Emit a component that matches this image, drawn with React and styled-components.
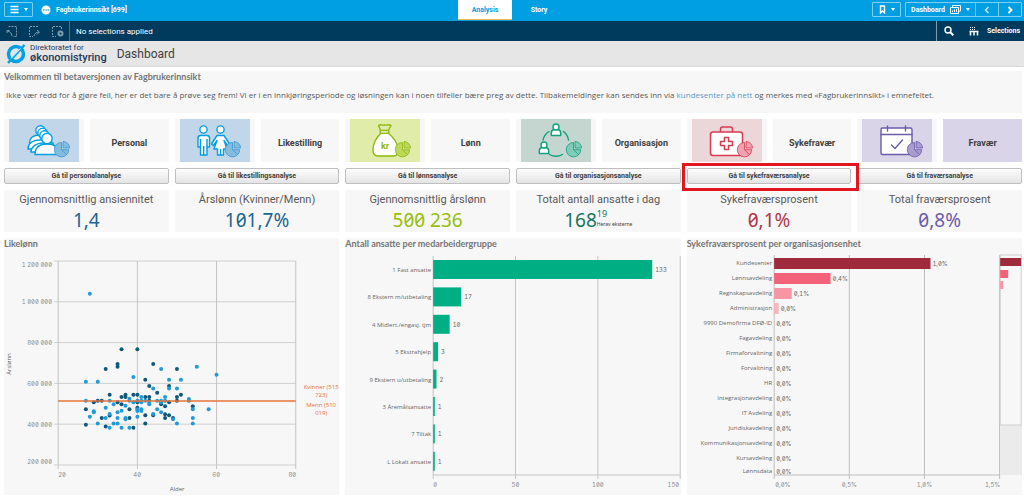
import React, { useState } from "react";
import styled, { createGlobalStyle } from "styled-components";

const BLUE = "#009fe3";

// [age, pay in thousands]
const men = [
  [36, 768], [40, 768], [35, 695], [35, 682], [32, 670], [44, 695], [50, 670],
  [42, 618], [43, 587], [45, 554], [48, 587], [33, 544], [37, 544], [39, 544],
  [40, 544], [51, 544], [36, 533], [37, 533], [42, 533], [43, 533], [50, 533],
  [30, 515], [31, 515], [50, 515], [29, 507], [35, 507], [40, 507], [48, 507],
  [43, 515], [36, 498], [46, 498], [47, 488], [54, 488], [40, 481], [27, 473],
  [38, 473], [33, 443], [42, 444], [44, 444], [47, 449], [48, 444], [31, 430],
  [38, 430], [47, 430], [49, 430], [42, 404], [27, 397], [32, 389], [39, 382],
];

const women = [
  [28, 1040], [46, 670], [55, 682], [60, 642], [39, 631], [27, 608], [30, 608],
  [48, 618], [51, 618], [44, 575], [48, 575], [50, 575], [38, 525], [41, 533],
  [47, 533], [53, 523], [53, 515], [27, 515], [33, 515], [38, 515], [40, 515],
  [41, 515], [42, 515], [45, 515], [46, 515], [47, 515], [39, 507], [41, 507],
  [43, 505], [46, 507], [34, 498], [43, 498], [37, 490], [32, 481], [54, 473],
  [58, 473], [40, 473], [41, 473], [45, 473], [29, 464], [36, 466], [40, 465],
  [41, 465], [35, 458], [46, 458], [29, 458], [33, 450], [44, 450], [28, 436],
  [40, 436], [32, 430], [35, 430], [37, 430], [54, 430], [37, 424], [49, 424],
  [30, 404], [34, 404], [35, 404], [50, 404], [54, 404], [33, 382], [36, 382],
  [38, 382],
];

const groups = [
  ["1 Fast ansatte", 133],
  ["8 Ekstern m/utbetaling", 17],
  ["4 Midlert./engasj. tjm", 10],
  ["5 Ekstrahjelp", 3],
  ["9 Ekstern u/utbetaling", 2],
  ["3 Åremålsansatte", 1],
  ["7 Tiltak", 1],
  ["L Lokalt ansatte", 1],
];

const units = [
  ["Kundesenter", 1.04, "1,0%", "#9e2a3b"],
  ["Lønnsavdeling", 0.375, "0,4%", "#f4627a"],
  ["Regnskapsavdeling", 0.117, "0,1%", "#f895a5"],
  ["Administrasjon", 0.03, "0,0%", "#fab3bf"],
  ["9990 Demofirma DFØ-ID", 0, "0,0%"],
  ["Fagavdeling", 0, "0,0%"],
  ["Firmaforvaltning", 0, "0,0%"],
  ["Forvaltning", 0, "0,0%"],
  ["HR", 0, "0,0%"],
  ["Integrasjonavdeling", 0, "0,0%"],
  ["IT Avdeling", 0, "0,0%"],
  ["Juridiskavdeling", 0, "0,0%"],
  ["Kommunikasjonsavdeling", 0, "0,0%"],
  ["Kursavdeling", 0, "0,0%"],
  ["Lønnsdata", 0, "0,0%"],
];

const Pie = ({ stroke, fill }) => (
  <g stroke={stroke} fill={fill} strokeWidth="0.8" strokeLinejoin="round">
    <path d="M52.5 23.5 A7.2 7.2 0 1 0 59.7 30.7 H52.5 Z" />
    <path d="M54 22.5 A6.5 6.5 0 0 1 60.5 29 H54 Z" />
    <path d="M52.5 30.7 L57.5 35.7" fill="none" />
  </g>
);

const PersonalIcon = () => (
  <Icon viewBox="0 0 70 43">
    <g stroke={BLUE} fill="#fff" strokeWidth="1.4">
      <path d="M20.5 24 C20.5 18 25 16 31 16 H40 V24 Z" />
      <path d="M19 30 C19 24 24 21 31 21 H42 V30 Z" />
      <path d="M22 33 C22 28 27 24 34 24 H44 V33 Z" />
      <circle cx="31.5" cy="11.5" r="4.7" />
      <circle cx="33.5" cy="14" r="4.7" />
      <circle cx="35.5" cy="16.5" r="4.7" />
      <path d="M26 35.5 C26 28 31 25 38 25 C45 25 50 28 50 35.5 Z" />
      <circle cx="38" cy="19.5" r="5.2" />
    </g>
    <Pie stroke="#3d97cf" fill="#84bce0" />
  </Icon>
);

const EqualityIcon = () => (
  <Icon viewBox="0 0 70 43">
    <g stroke={BLUE} fill="#fff" strokeWidth="1.4" strokeLinejoin="round">
      <circle cx="23.5" cy="10.5" r="3.6" />
      <path d="M18 28 V19 Q18 16.5 20.5 16.5 H27 Q29.5 16.5 29.5 19 V28 H27 V36 H20.5 V28 Z" />
      <path d="M20.5 20 V28 M27 20 V28 M23.7 27 V36" fill="none" />
      <circle cx="40.5" cy="10.5" r="3.6" />
      <path d="M37 16.5 H44 L49.5 25 L47.5 26.5 L44 21.5 L47 30 H43.5 V36 H37.5 V30 H34 L37 21.5 L33.5 26.5 L31.5 25 Z" />
      <path d="M40.5 30 V36" />
    </g>
    <Pie stroke="#3d97cf" fill="#84bce0" />
  </Icon>
);

const PayIcon = () => (
  <Icon viewBox="0 0 70 43">
    <g stroke="#8fb80e" fill="#fff" strokeWidth="1.4" strokeLinejoin="round">
      <path d="M31 14 C26 19 23 26 23 31 C23 35 25 37 28 37 H44 C47 37 49 34 48 29 C47 23 43 18 38 14 Z" />
      <path d="M31 12 L28.5 6.5 C31 4.5 32 7 34.5 5.8 C37 7 38.5 4.5 41 6.5 L38 12 Z" fill="#dfecaa" />
      <rect x="30" y="11.5" width="9" height="2.6" rx="1.3" />
    </g>
    <text x="35" y="30" textAnchor="middle" fontSize="9" fontWeight="700" fill="#8fb80e">kr</text>
    <Pie stroke="#8fb80e" fill="#bcd75a" />
  </Icon>
);

const Member = ({ x, y }) => (
  <g transform={`translate(${x} ${y})`} stroke="#10a07b" fill="#fff" strokeWidth="1.4" strokeLinejoin="round">
    <path d="M-4.7 6.5 V4 Q-4.7 1 -2 0.5 H2 Q4.7 1 4.7 4 V6.5 Z" />
    <circle cx="0" cy="-2" r="3" />
  </g>
);

const OrganisationIcon = () => (
  <Icon viewBox="0 0 70 43">
    <g fill="none" stroke="#10a07b" strokeWidth="1.4" strokeLinecap="round">
      <path d="M28 12.5 A13.5 13.5 0 0 0 22 21" />
      <path d="M42.5 12.5 A13.5 13.5 0 0 1 47.5 21" />
      <path d="M28.5 35.5 A13.5 13.5 0 0 0 41.5 35.5" />
    </g>
    <Member x={35} y={10} />
    <Member x={23} y={28} />
    <Pie stroke="#10a07b" fill="#7fcdb8" />
  </Icon>
);

const SickIcon = () => (
  <Icon viewBox="0 0 70 43">
    <g stroke="#d83a52" fill="#fff" strokeWidth="1.5" strokeLinejoin="round">
      <path d="M28.5 13 V10 Q28.5 8 30.5 8 H38.5 Q40.5 8 40.5 10 V13" fill="none" />
      <rect x="18.5" y="13" width="32" height="23.5" rx="2.5" />
      <path d="M32.5 18.5 H36.5 V22.5 H40.5 V26.5 H36.5 V30.5 H32.5 V26.5 H28.5 V22.5 H32.5 Z" />
    </g>
    <Pie stroke="#d83a52" fill="#f0a3ae" />
  </Icon>
);

const AbsenceIcon = () => (
  <Icon viewBox="0 0 70 43">
    <g stroke="#6c5cab" fill="#fff" strokeWidth="1.4" strokeLinecap="round" strokeLinejoin="round">
      <rect x="19" y="9" width="31" height="26.5" rx="1.5" />
      <path d="M19 15.5 H50 M25.5 7 V12 M43.5 7 V12" fill="none" />
      <path d="M29.5 26 L33 29.5 L40.5 21" fill="none" />
    </g>
    <Pie stroke="#6c5cab" fill="#a79bcf" />
  </Icon>
);

const topics = [
  { name: "Personal", action: "Gå til personalanalyse", icon: PersonalIcon, tint: "#c1d6e9" },
  { name: "Likestilling", action: "Gå til likestillingsanalyse", icon: EqualityIcon, tint: "#c1d6e9" },
  { name: "Lønn", action: "Gå til lønnsanalyse", icon: PayIcon, tint: "#dfecaa" },
  { name: "Organisasjon", action: "Gå til organisasjonsanalyse", icon: OrganisationIcon, tint: "#c5d6d0" },
  { name: "Sykefravær", action: "Gå til sykefraværsanalyse", icon: SickIcon, tint: "#ecd7d8", marked: true },
  { name: "Fravær", action: "Gå til fraværsanalyse", icon: AbsenceIcon, tint: "#d9d4e7", filled: true },
];

const kpis = [
  { label: "Gjennomsnittlig ansiennitet", value: "1,4", color: "#1c6690" },
  { label: "Årslønn (Kvinner/Menn)", value: "101,7%", color: "#1c6690" },
  { label: "Gjennomsnittlig årslønn", value: "500 236", color: "#97bf0d" },
  { label: "Totalt antall ansatte i dag", value: "168", color: "#18735c", extra: "19", note: "Herav eksterne" },
  { label: "Sykefraværsprosent", value: "0,1%", color: "#b03547" },
  { label: "Total fraværsprosent", value: "0,8%", color: "#6c5cab" },
];

const ScatterChart = () => {
  const x = (age) => 54 + (age - 20) * 3.96;
  const y = (pay) => 215 - (pay - 200) * 0.204;

  return (
    <Chart viewBox="0 0 335 245" role="img" aria-label="Likelønn">
      {[200, 400, 600, 800, 1000, 1200].map((pay) => (
        <path key={pay} d={`M50 ${y(pay)} H${x(80)}`} stroke="#cfcfcf" />
      ))}
      {[20, 40, 60, 80].map((age) => (
        <path key={age} d={`M${x(age)} 11 V219`} stroke="#c4c4c4" />
      ))}
      <AxisText x="48" y="17" $end>1 200 000</AxisText>
      <AxisText x="48" y="54" $end>1 000 000</AxisText>
      <AxisText x="48" y="95" $end>800 000</AxisText>
      <AxisText x="48" y="136" $end>600 000</AxisText>
      <AxisText x="48" y="177" $end>400 000</AxisText>
      <AxisText x="48" y="214" $end>200 000</AxisText>
      <AxisText x="54" y="227">20</AxisText>
      <AxisText x="133" y="227" $middle>40</AxisText>
      <AxisText x="212" y="227" $middle>60</AxisText>
      <AxisText x="292" y="227" $end>80</AxisText>
      <LabelText x="173" y="241" $middle>Alder</LabelText>
      <LabelText transform="translate(7 114) rotate(-90)" $middle>Årslønn</LabelText>
      {men.map(([age, pay], i) => (
        <circle key={i} cx={x(age)} cy={y(pay)} r="2" fill="#10587a" />
      ))}
      {women.map(([age, pay], i) => (
        <circle key={i} cx={x(age)} cy={y(pay)} r="2" fill="#1f9bd7" />
      ))}
      <path d={`M${x(20)} ${y(514)} H${x(80)}`} stroke="#e6743a" strokeWidth="1.5" />
      <RefText x="317" y="139">Kvinner (515</RefText>
      <RefText x="317" y="147">723)</RefText>
      <RefText x="317" y="157">Menn (510</RefText>
      <RefText x="317" y="165">019)</RefText>
    </Chart>
  );
};

const GroupChart = () => {
  const x = (count) => 88 + count * 1.647;

  return (
    <Chart viewBox="0 0 335 245" role="img" aria-label="Antall ansatte per medarbeidergruppe">
      {[0, 50, 100, 150].map((count) => (
        <path key={count} d={`M${x(count)} 6 V229`} stroke="#c4c4c4" />
      ))}
      <path d="M88 225 H335" stroke="#c4c4c4" />
      {groups.map(([name, count], i) => (
        <g key={name}>
          <rect x="88" y={10 + i * 27.4} width={count * 1.647} height="19" fill="#00ae84" />
          <LabelText x="86" y={22 + i * 27.4} $end>{name}</LabelText>
          <AxisText x={x(count) + 3} y={22 + i * 27.4} $dark>{count}</AxisText>
        </g>
      ))}
      <AxisText x="88" y="237">0</AxisText>
      <AxisText x={x(50)} y="237" $middle>50</AxisText>
      <AxisText x={x(100)} y="237" $middle>100</AxisText>
      <AxisText x="334" y="237" $end>150</AxisText>
    </Chart>
  );
};

const UnitChart = () => {
  const x = (share) => 87 + share * 150.3;

  return (
    <Chart viewBox="0 0 335 245" role="img" aria-label="Sykefraværsprosent per organisasjonsenhet">
      {[0, 0.5, 1, 1.5].map((share) => (
        <path key={share} d={`M${x(share)} 5 V229`} stroke="#bdbdbd" />
      ))}
      <path d="M87 225 H313" stroke="#bdbdbd" />
      {units.map(([name, share, text, color], i) => {
        const top = Math.min(8 + i * 15, 216);
        return (
          <g key={name}>
            <rect x="87" y={top} width={share * 150.3} height="11" fill={color} />
            <LabelText x="85" y={top + 7} $end>{name}</LabelText>
            <AxisText x={x(share) + 2} y={top + 8} $dark>{text}</AxisText>
          </g>
        );
      })}
      <AxisText x="88" y="237">0,0%</AxisText>
      <AxisText x={x(0.5)} y="237" $middle>0,5%</AxisText>
      <AxisText x={x(1)} y="237" $middle>1,0%</AxisText>
      <AxisText x="313" y="237" $end>1,5%</AxisText>
      <rect x="313" y="175" width="22" height="50" fill="#ebebeb" />
      <rect x="313" y="5" width="21" height="170" fill="none" stroke="#cfcfcf" />
      <rect x="313" y="8" width="21" height="8" fill="#9e2a3b" />
      <rect x="313" y="20" width="8" height="8" fill="#f4627a" />
      <rect x="313" y="31" width="3" height="8" fill="#f895a5" />
    </Chart>
  );
};

const App = () => {
  const [tab, setTab] = useState("Analysis");

  return (
    <>
      <GlobalStyle />
      <TopBar>
        <BarSide>
          <BarButton type="button" aria-label="Meny">
            <Glyph width="9" height="9" viewBox="0 0 9 9">
              <path d="M0.5 1.5 H8.5 M0.5 4.5 H8.5 M0.5 7.5 H8.5" />
            </Glyph>
            <Caret />
          </BarButton>
          <AppName>
            <Glyph width="10" height="10" viewBox="0 0 10 10">
              <circle cx="5" cy="5" r="4.5" fill="#fff" stroke="none" />
              <path d="M2.2 5 H3.4 M4.4 5 H5.6 M6.6 5 H7.8" stroke={BLUE} />
            </Glyph>
            Fagbrukerinnsikt [699]
          </AppName>
        </BarSide>
        <Tabs>
          {["Analysis", "Story"].map((name) => (
            <Tab key={name} type="button" $active={tab === name} onClick={() => setTab(name)}>
              {name}
            </Tab>
          ))}
        </Tabs>
        <BarSide $right>
          <BarButton type="button" aria-label="Bokmerker">
            <Glyph width="7" height="9" viewBox="0 0 7 9">
              <path d="M1.5 1 H5.5 V8 L3.5 6 L1.5 8 Z" />
            </Glyph>
            <Caret />
          </BarButton>
          <ButtonGroup>
            <GroupButton type="button">
              Dashboard
              <Glyph width="11" height="9" viewBox="0 0 11 9" $thin>
                <path d="M2.5 2.5 V0.5 H10.5 V6 H9 M0.5 2.5 H8.5 V8.5 H0.5 Z M2.5 7 V5.5 M4.5 7 V4.5 M6.5 7 V4" />
              </Glyph>
              <Caret />
            </GroupButton>
            <GroupButton type="button" aria-label="Forrige" $dim>
              <Glyph width="6" height="8" viewBox="0 0 6 8">
                <path d="M4.5 1 L1.5 4 L4.5 7" />
              </Glyph>
            </GroupButton>
            <GroupButton type="button" aria-label="Neste">
              <Glyph width="6" height="8" viewBox="0 0 6 8" $bold>
                <path d="M1.5 1 L4.5 4 L1.5 7" />
              </Glyph>
            </GroupButton>
          </ButtonGroup>
        </BarSide>
      </TopBar>

      <SelectionBar>
        <SelectionTools>
          <ToolButton type="button" aria-label="Tilbake">
            <Glyph width="11" height="11" viewBox="0 0 11 11" $thin>
              <path d="M2.5 0.5 H10.5 V10.5 H7" strokeDasharray="2 1" />
              <path d="M1 4.5 L3.5 4.5 M1 4.5 V7 M1.5 5 C4 5.5 5.5 7 6 10" />
            </Glyph>
          </ToolButton>
          <ToolButton type="button" aria-label="Frem">
            <Glyph width="11" height="11" viewBox="0 0 11 11" $thin>
              <path d="M9 0.5 H0.5 V10.5 H4" strokeDasharray="2 1" />
              <path d="M10.5 6 L8 4 M10.5 6 L8 8.5 M10 6 C7 6 5.5 8 5 10" />
            </Glyph>
          </ToolButton>
          <ToolButton type="button" aria-label="Fjern valg">
            <Glyph width="12" height="11" viewBox="0 0 12 11" $thin>
              <path d="M9.5 3 V0.5 H0.5 V10.5 H4" strokeDasharray="2 1" />
              <circle cx="8.5" cy="7.5" r="2" strokeWidth="2" />
            </Glyph>
          </ToolButton>
        </SelectionTools>
        <SelectionStatus>No selections applied</SelectionStatus>
        <SearchButton type="button" aria-label="Søk">
          <Glyph width="10" height="10" viewBox="0 0 10 10">
            <circle cx="4" cy="4" r="3" />
            <path d="M6 6 L9.3 9.3" strokeWidth="2" />
          </Glyph>
        </SearchButton>
        <SelectionsButton type="button">
          <Glyph width="10" height="10" viewBox="0 0 10 10">
            <path d="M1 1.5 H6 M1 3.5 H6" strokeDasharray="1 1" strokeWidth="1" />
            <path d="M0.5 5.5 H9.5 M1.5 6 V9.5 M5 6 V9.5 M8.5 6 V9.5" strokeWidth="1.5" />
          </Glyph>
          Selections
        </SelectionsButton>
      </SelectionBar>

      <SheetHeader>
        <Logo>
          <svg width="20" height="20" viewBox="0 0 20 20">
            <circle cx="10" cy="10" r="7.5" fill="none" stroke={BLUE} strokeWidth="3.5" />
            <path d="M2 19 L18.5 1" stroke={BLUE} strokeWidth="2.5" />
            <path d="M5 14.5 L14.5 4.5" stroke="#fff" strokeWidth="1" />
          </svg>
          <LogoText>
            Direktoratet for
            <strong>økonomistyring</strong>
          </LogoText>
        </Logo>
        <SheetTitle>Dashboard</SheetTitle>
      </SheetHeader>

      <Sheet>
        <Panel>
          <PanelTitle>Velkommen til betaversjonen av Fagbrukerinnsikt</PanelTitle>
          <Intro>
            Ikke vær redd for å gjøre feil, her er det bare å prøve seg frem! Vi er i en
            innkjøringsperiode og løsningen kan i noen tilfeller bære preg av dette.
            Tilbakemeldinger kan sendes inn via <a href="#kundesenter">kundesenter på nett</a> og
            merkes med «Fagbrukerinnsikt» i emnefeltet.
          </Intro>
        </Panel>

        <Topics>
          {topics.map(({ name, action, icon: TopicIcon, tint, filled, marked }) => (
            <Topic key={name}>
              <Tiles>
                <IconTile>
                  <Tint $tint={tint}>
                    <TopicIcon />
                  </Tint>
                </IconTile>
                <NameTile $tint={filled && tint}>{name}</NameTile>
              </Tiles>
              <ActionSlot>
                <ActionButton type="button">{action}</ActionButton>
                {marked && <Marker />}
              </ActionSlot>
            </Topic>
          ))}
        </Topics>

        <Kpis>
          {kpis.map(({ label, value, color, extra, note }) => (
            <Kpi key={label}>
              <KpiLabel>{label}</KpiLabel>
              <KpiValue $color={color}>
                {value}
                {extra && (
                  <KpiExtra>
                    {extra}
                    <small>{note}</small>
                  </KpiExtra>
                )}
              </KpiValue>
            </Kpi>
          ))}
        </Kpis>

        <Charts>
          <Panel>
            <PanelTitle>Likelønn</PanelTitle>
            <ScatterChart />
          </Panel>
          <Panel>
            <PanelTitle>Antall ansatte per medarbeidergruppe</PanelTitle>
            <GroupChart />
          </Panel>
          <Panel>
            <PanelTitle>Sykefraværsprosent per organisasjonsenhet</PanelTitle>
            <UnitChart />
          </Panel>
        </Charts>
      </Sheet>
    </>
  );
};

export default App;

const GlobalStyle = createGlobalStyle`
  * {
    box-sizing: border-box;
  }

  body {
    margin: 0;
    background-color: #fff;
    color: #595959;
    font-family: Roboto, "Liberation Sans", sans-serif;
  }

  button {
    margin: 0;
    padding: 0;
    border: 0;
    background: none;
    color: inherit;
    font-family: inherit;
    cursor: pointer;
  }
`;

const TopBar = styled.header`
  display: grid;
  grid-template-columns: 1fr auto 1fr;
  height: 21px;
  background-color: ${BLUE};
  color: #fff;
  font-size: 7px;
  font-weight: 700;
`;

const BarSide = styled.div`
  display: flex;
  align-items: center;
  justify-content: ${({ $right }) => ($right ? "flex-end" : "flex-start")};
  gap: ${({ $right }) => ($right ? "4px" : "8px")};
  padding: 0 2px 2px 4px;
`;

const BarButton = styled.button`
  display: flex;
  align-items: center;
  justify-content: center;
  gap: 5px;
  width: 29px;
  height: 15px;
  border: 1px solid #7fcff1;
  border-radius: 1px;
`;

const Caret = styled.span`
  border: 2px solid transparent;
  border-top: 3px solid #fff;
  border-bottom: 0;
`;

const Glyph = styled.svg`
  fill: none;
  stroke: currentColor;
  stroke-width: ${({ $bold, $thin }) => ($bold ? 2 : $thin ? 1 : 1.4)};
  flex: none;
`;

const AppName = styled.span`
  display: flex;
  align-items: center;
  gap: 5px;
`;

const Tabs = styled.nav`
  display: flex;
`;

const Tab = styled.button`
  width: 54px;
  height: 20px;
  font-size: 7px;
  font-weight: 700;
  background-color: ${({ $active }) => ($active ? "#fff" : "transparent")};
  color: ${({ $active }) => ($active ? BLUE : "#fff")};
  border-bottom: 1px solid ${({ $active }) => ($active ? "#f5b64c" : "transparent")};
`;

const ButtonGroup = styled.div`
  display: flex;
  height: 15px;
  border: 1px solid #7fcff1;
  border-radius: 1px;
`;

const GroupButton = styled.button`
  display: flex;
  align-items: center;
  justify-content: center;
  gap: 5px;
  min-width: 23px;
  padding: 0 5px;
  font-size: 7px;
  font-weight: 700;
  opacity: ${({ $dim }) => ($dim ? 0.8 : 1)};

  & + & {
    border-left: 1px solid #7fcff1;
  }
`;

const SelectionBar = styled.div`
  display: flex;
  align-items: center;
  height: 20px;
  background-color: #003a5d;
  color: #fff;
`;

const SelectionTools = styled.div`
  display: flex;
  align-items: center;
  gap: 12px;
  height: 100%;
  padding: 0 5px 0 6px;
  border-right: 1px solid #4d7288;
`;

const ToolButton = styled.button`
  display: flex;
  color: #7f9aab;
`;

const SelectionStatus = styled.span`
  flex: 1;
  padding-left: 6px;
  font-size: 8px;
`;

const SearchButton = styled.button`
  display: flex;
  align-items: center;
  justify-content: center;
  width: 25px;
  height: 100%;
  border-left: 1px solid #7f9aab;
`;

const SelectionsButton = styled.button`
  display: flex;
  align-items: center;
  gap: 8px;
  padding: 0 4px 0 8px;
  font-size: 7px;
  font-weight: 700;
`;

const SheetHeader = styled.div`
  display: flex;
  align-items: center;
  gap: 10px;
  height: 26px;
  padding-left: 6px;
  background-color: #e6e6e6;
  border-bottom: 1px solid #d4d4d4;
`;

const Logo = styled.div`
  display: flex;
  align-items: center;
  gap: 4px;
`;

const LogoText = styled.div`
  color: #23395d;
  font-size: 8px;
  line-height: 8px;

  strong {
    display: block;
    font-size: 11px;
    font-weight: 500;
    line-height: 11px;
  }
`;

const SheetTitle = styled.h1`
  margin: 0;
  font-size: 12px;
  font-weight: 400;
  color: #404040;
`;

const Sheet = styled.main`
  display: flex;
  flex-direction: column;
  gap: 6px;
  padding: 4px 2px 2px 4px;
`;

const Panel = styled.section`
  min-width: 0;
  background-color: #f7f7f7;
`;

const PanelTitle = styled.h2`
  margin: 0;
  font-family: Lato, sans-serif;
  font-size: 9px;
  line-height: 12px;
  color: #757575;
`;

const Intro = styled.p`
  margin: 0;
  padding: 6px 2px 12px;
  font-family: "Open Sans", sans-serif;
  font-size: 8px;
  line-height: 12px;

  a {
    color: #5b9ccb;
    text-decoration: none;
  }
`;

const Topics = styled.div`
  display: grid;
  grid-template-columns: repeat(6, 1fr);
  gap: 6px;
`;

const Topic = styled.div`
  display: flex;
  flex-direction: column;
  gap: 6px;
`;

const Tiles = styled.div`
  display: grid;
  grid-template-columns: 1fr 1fr;
  gap: 6px;
  height: 43px;
`;

const IconTile = styled.div`
  padding: 0 5px;
  background-color: #f7f7f7;
`;

const Tint = styled.div`
  display: flex;
  justify-content: center;
  background-color: ${({ $tint }) => $tint};
`;

const Icon = styled.svg`
  width: 70px;
  height: 43px;
  flex: none;
`;

const NameTile = styled.div`
  display: flex;
  align-items: center;
  justify-content: center;
  padding-top: 4px;
  background-color: ${({ $tint }) => $tint || "#f7f7f7"};
  color: #404040;
  font-size: 9px;
  font-weight: 700;
`;

const ActionSlot = styled.div`
  position: relative;
  display: flex;
`;

const ActionButton = styled.button`
  flex: 1;
  height: 16px;
  border: 1px solid #bfbfbf;
  border-radius: 2px;
  background-image: linear-gradient(#fdfdfd, #e4e4e4);
  color: #404040;
  font-size: 7px;
  font-weight: 700;
`;

const Marker = styled.span`
  position: absolute;
  inset: -5px -8px -7px -5px;
  z-index: 1;
  border: 3px solid #e3151f;
  pointer-events: none;
`;

const Kpis = styled.div`
  display: grid;
  grid-template-columns: repeat(6, 1fr);
  gap: 6px;
`;

const Kpi = styled.div`
  display: flex;
  flex-direction: column;
  align-items: center;
  height: 42px;
  padding-top: 2px;
  background-color: #f7f7f7;
`;

const KpiLabel = styled.span`
  font-size: 11px;
  line-height: 16px;
`;

const KpiValue = styled.span`
  display: flex;
  color: ${({ $color }) => $color};
  font-family: "Noto Sans", sans-serif;
  font-size: 19px;
  font-weight: 400;
  font-variant-numeric: tabular-nums slashed-zero;
  line-height: 24px;
`;

const KpiExtra = styled.span`
  display: flex;
  flex-direction: column;
  width: min-content;
  font-size: 9px;
  line-height: 12px;
  white-space: nowrap;

  small {
    font-size: 5px;
    line-height: 8px;
    color: #404040;
  }
`;

const Charts = styled.div`
  display: grid;
  grid-template-columns: repeat(3, 1fr);
  gap: 6px;
`;

const Chart = styled.svg`
  display: block;
  width: 100%;
  height: 245px;
`;

const AxisText = styled.text`
  fill: ${({ $dark }) => ($dark ? "#666" : "#8c8c8c")};
  font-family: Inter, sans-serif;
  font-size: 6px;
  font-variant-numeric: tabular-nums slashed-zero;
  text-anchor: ${({ $end, $middle }) => ($end ? "end" : $middle ? "middle" : "start")};
`;

const LabelText = styled.text`
  fill: #666;
  font-family: "Open Sans", sans-serif;
  font-size: 6px;
  text-anchor: ${({ $end, $middle }) => ($end ? "end" : $middle ? "middle" : "start")};
`;

const RefText = styled.text`
  fill: #e6743a;
  font-family: "Open Sans", sans-serif;
  font-size: 6px;
  text-anchor: middle;
`;
